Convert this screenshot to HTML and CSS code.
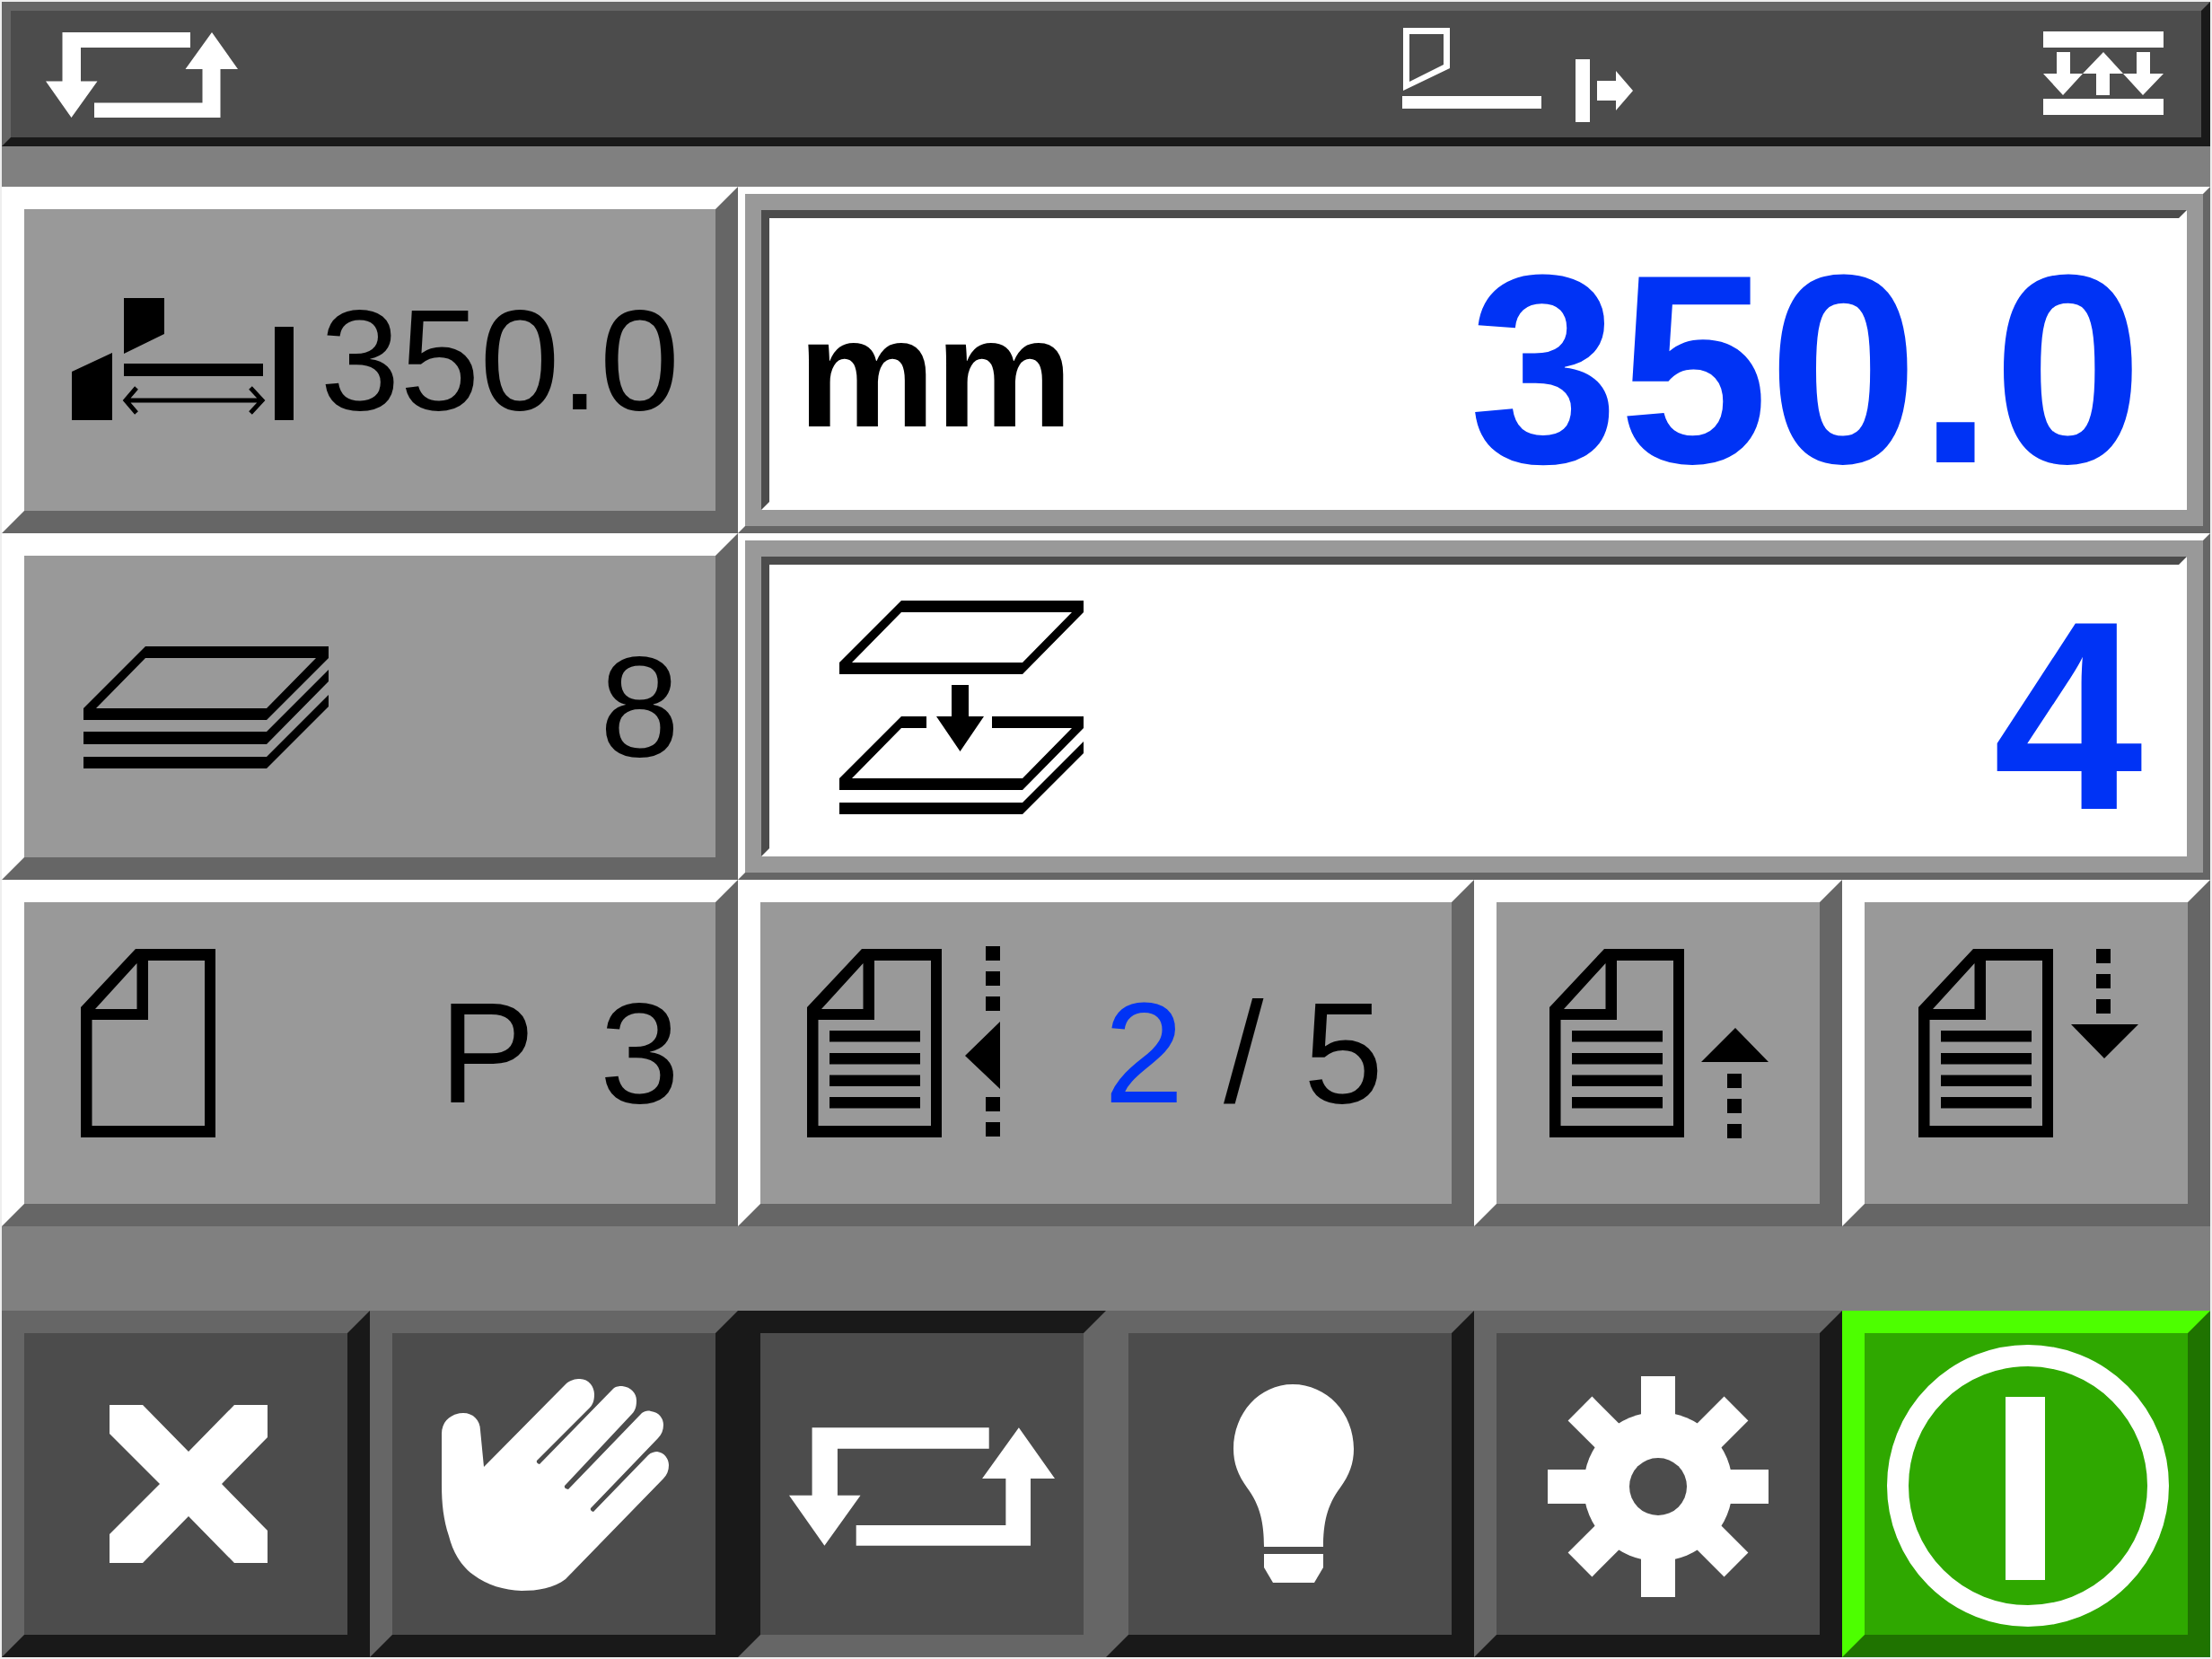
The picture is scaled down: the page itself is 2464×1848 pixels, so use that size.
FILE: index.html
```html
<!DOCTYPE html>
<html lang="en">
<head>
    <meta charset="UTF-8">
    <title>Cutter control</title>
    <link rel="stylesheet" href="styles.css">
</head>
<body>

<!-- shared icon parts -->
<svg class="defs" aria-hidden="true">
    <symbol id="cycle" viewBox="0 0 214 95">
        <path d="M18.500 0H161V17H39V54.500H57.500L28.500 95L0 54.500H18.500Z"/>
        <path d="M185 0L214 41H194.500V95H54V78.500H174.500V41H155.500Z"/>
    </symbol>
    <symbol id="page" viewBox="0 0 150 210">
        <path fill-rule="evenodd" d="M0 65L61 0H150V210H0ZM12.500 79V197H138V13H75V79ZM16 67H62.500V16Z"/>
    </symbol>
    <symbol id="text-page" viewBox="0 0 150 210">
        <use href="#page" width="150" height="210"/>
        <path d="M25 91H126V103.500H25ZM25 116H126V128.500H25ZM25 140.500H126V153H25ZM25 165H126V177.500H25Z"/>
    </symbol>
</svg>

<div class="terminal">

    <header class="status">
        <svg width="214" height="141" viewBox="0 0 214 141" role="img" aria-label="Automatic cycle">
            <use href="#cycle" y="24" width="214" height="95"/>
        </svg>
        <div class="status-right">
            <svg width="258" height="141" viewBox="0 0 258 141" role="img" aria-label="Knife up, backgauge moving back">
                <path fill-rule="evenodd" d="M2 19H54V64L2 89ZM9 26V79L47 60V26Z"/>
                <path d="M1 95H156V109H1ZM194 54H210V124H194Z"/>
                <path d="M218 78H239V67L258 89L239 111V100H218Z"/>
            </svg>
            <svg width="134" height="141" viewBox="0 0 134 141" role="img" aria-label="Clamp">
                <path d="M0 23H134V41H0ZM0 98H134V116H0Z"/>
                <path d="M15 46H30V70H44L22 94L0 70H15Z"/>
                <path d="M67 46L89 70H74V94H59V70H44Z"/>
                <path d="M104 46H119V70H134L111 94L89 70H104Z"/>
            </svg>
        </div>
    </header>

    <main class="grid">
        <button class="key key-wide" type="button" aria-label="Current size 350.0">
            <svg width="310" height="336" viewBox="0 0 310 336">
                <path d="M111 99H156V139L111 161ZM53 181L98 160V235H53ZM111 172H266V186H111ZM279 131H300V235H279Z"/>
                <path class="line" d="M113 213H265M125 199L113 213L125 227M252 199L265 213L252 227"/>
            </svg>
            <span class="value">350.0</span>
        </button>
        <div class="frame">
            <div class="screen">
                <span class="unit">mm</span>
                <output class="reading">350.0</output>
            </div>
        </div>

        <button class="key key-wide" type="button" aria-label="Sheets per stack 8">
            <svg width="340" height="336" viewBox="0 0 340 336">
                <path fill-rule="evenodd" d="M66 170L135 101H339V114L270 183H66ZM80 170H270L325 114H135Z"/>
                <path d="M66 196H270L339 127V140L270 210H66ZM66 224H270L339 155V168L270 237H66Z"/>
            </svg>
            <span class="value">8</span>
        </button>
        <div class="frame">
            <div class="screen">
                <svg width="352" height="316" viewBox="0 0 352 316" role="img" aria-label="Sheets added">
                    <path fill-rule="evenodd" d="M78 109L147 40H350V53L282 122H78ZM92 109H282L337 53H147Z"/>
                    <path d="M203 134H222V169H239L212.500 208L186 169H203Z"/>
                    <path d="M78 238L147 169H175V182H147L92 238H282L337 182H248V169H350V182L282 251H78Z"/>
                    <path d="M78 265H282L350 197V210L282 278H78Z"/>
                </svg>
                <output class="reading">4</output>
            </div>
        </div>

        <button class="key key-wide" type="button" aria-label="Program 3">
            <svg width="214" height="336" viewBox="0 0 214 336">
                <use href="#page" x="63" y="52" width="150" height="210"/>
            </svg>
            <span class="value program"><span>P</span><span>3</span></span>
        </button>
        <button class="key key-wide key-step" type="button" aria-label="Step 2 of 5">
            <svg width="268" height="336" viewBox="0 0 268 336">
                <use href="#text-page" x="52" y="52" width="150" height="210"/>
                <path d="M251 49H267V65H251ZM251 77H267V93H251ZM251 105H267V121H251ZM251 217H267V233H251ZM251 245H267V261H251ZM267 133V208L228 171Z"/>
            </svg>
            <span class="value"><span class="current">2</span> / 5</span>
        </button>
        <button class="key" type="button" aria-label="Previous step">
            <svg width="360" height="336" viewBox="0 0 360 336">
                <use href="#text-page" x="59" y="52" width="150" height="210"/>
                <path d="M228 178L266 140L303 178ZM257 191H273V207H257ZM257 219H273V235H257ZM257 247H273V263H257Z"/>
            </svg>
        </button>
        <button class="key" type="button" aria-label="Next step">
            <svg width="360" height="336" viewBox="0 0 360 336">
                <use href="#text-page" x="60" y="52" width="150" height="210"/>
                <path d="M230 136H305L267 174ZM258 52H274V68H258ZM258 80H274V96H258ZM258 108H274V124H258Z"/>
            </svg>
        </button>
    </main>

    <nav class="grid">
        <button class="key key-dark" type="button" aria-label="Cancel">
            <svg width="360" height="336" viewBox="0 0 360 336">
                <path d="M95 80H132L183 132L234 80H271V116L220 168L271 220V256H234L183 204L132 256H95V224L151 168L95 112Z"/>
            </svg>
        </button>
        <button class="key key-dark" type="button" aria-label="Manual">
            <svg width="360" height="336" viewBox="0 0 360 336">
                <path d="M55 112C55 97 67 89 79 89C90 89 98 97 98 108L102 149L193 57C198 52 204 51 209 51C219 51 225 60 225 68C225 74 224 79 220 83L161 142Q160 145 164 146L246 62C249 59 253 59 256 59C266 60 272 67 272 75C272 81 271 86 267 90L192 170Q191 173 196 174L278 89C281 87 284 86 288 87C297 88 302 95 302 102C302 108 300 113 296 117L221 195Q220 198 224 199L285 136C288 133 292 132 295 132C303 133 308 140 308 147C308 153 306 158 302 162L193 274C180 284 162 287 144 287C124 286 106 281 90 269C75 258 67 242 63 226C57 208 55 190 55 169Z"/>
            </svg>
        </button>
        <button class="key key-dark key-pressed" type="button" aria-pressed="true" aria-label="Automatic">
            <svg width="360" height="336" viewBox="0 0 360 336">
                <use href="#cycle" x="32" y="105" width="296" height="132"/>
            </svg>
        </button>
        <button class="key key-dark" type="button" aria-label="Light">
            <svg width="360" height="336" viewBox="0 0 360 336">
                <path d="M183 57C221 57 251 89 251 129C251 145 246 158 236 172C221 192 217 212 217 238H151C151 212 147 192 132 172C122 158 117 145 117 129C117 89 146 57 183 57Z"/>
                <path d="M151 246H217V261L207 278H161L151 261Z"/>
            </svg>
        </button>
        <button class="key key-dark" type="button" aria-label="Settings">
            <svg width="360" height="336" viewBox="-180 -171 360 336">
                <path d="M-19 -123H19V123H-19ZM-123 -19H123V19H-123Z"/>
                <path transform="rotate(45)" d="M-19 -123H19V123H-19ZM-123 -19H123V19H-123Z"/>
                <circle r="83"/>
                <circle class="hole" r="32"/>
            </svg>
        </button>
        <button class="key key-start" type="button" aria-label="Start">
            <svg width="360" height="336" viewBox="0 0 360 336">
                <circle class="ring" cx="182" cy="170" r="145"/>
                <path d="M157 71H201V275H157Z"/>
            </svg>
        </button>
    </nav>

</div>

</body>
</html>
```

FILE: styles.css
```css
* {
    box-sizing: border-box;
}

body {
    margin: 0;
    padding: 2px;
    background: #eee;
    font-family: "Liberation Sans", Arial, sans-serif;
}

svg {
    display: block;
    flex-shrink: 0;
    fill: currentColor;
}

.defs {
    position: absolute;
    width: 0;
    height: 0;
}

.terminal {
    background: #808080;
}

/* top bar */

.status {
    display: grid;
    grid-template-columns: 16fr 9fr;
    margin-bottom: 45px;
    padding: 0 42px 0 39px;
    border: 10px solid;
    border-color: #666 #191919 #191919 #666;
    background: #4c4c4c;
    color: #fff;
}

.status-right {
    display: flex;
    justify-content: space-between;
}

/* keys */

.grid {
    display: grid;
    grid-template-columns: repeat(6, 1fr);
}

main {
    margin-bottom: 94px;
}

.key {
    display: flex;
    align-items: center;
    justify-content: center;
    min-width: 0;
    margin: 0;
    padding: 0;
    border: 25px solid;
    border-color: #fff #666 #666 #fff;
    border-radius: 0;
    background: #999;
    color: #000;
    font: inherit;
}

.key-wide {
    grid-column: span 2;
    justify-content: space-between;
    padding-right: 40px;
}

.key-step {
    padding-right: 76px;
}

.key-dark {
    border-color: #666 #191919 #191919 #666;
    background: #4c4c4c;
    color: #fff;
}

.key-pressed {
    border-color: #191919 #666 #666 #191919;
}

.key-start {
    border-color: #4dff00 #1f7300 #1f7300 #4dff00;
    background: #2fa800;
    color: #fff;
}

.value {
    font-size: 160px;
    line-height: 200px;
    white-space: nowrap;
}

.program {
    display: flex;
    gap: 72px;
}

.current {
    color: #0033f5;
}

/* readouts */

.frame {
    grid-column: span 4;
    padding: 18px;
    border: 8px solid;
    border-color: #fff #666 #666 #fff;
    background: #999;
}

.screen {
    display: flex;
    align-items: center;
    justify-content: space-between;
    height: 334px;
    padding-right: 40px;
    border: 9px solid;
    border-color: #4c4c4c #fff #fff #4c4c4c;
    background: #fff;
    color: #000;
    font-weight: bold;
}

.unit {
    padding: 28px 0 0 32px;
    font-size: 172px;
    line-height: 200px;
}

.reading {
    margin-left: auto;
    padding-top: 20px;
    color: #0033f5;
    font-size: 300px;
    line-height: 280px;
}

/* icon details */

.line {
    fill: none;
    stroke: currentColor;
    stroke-width: 5px;
}

.hole {
    fill: #4c4c4c;
}

.ring {
    fill: none;
    stroke: currentColor;
    stroke-width: 24px;
}
```
